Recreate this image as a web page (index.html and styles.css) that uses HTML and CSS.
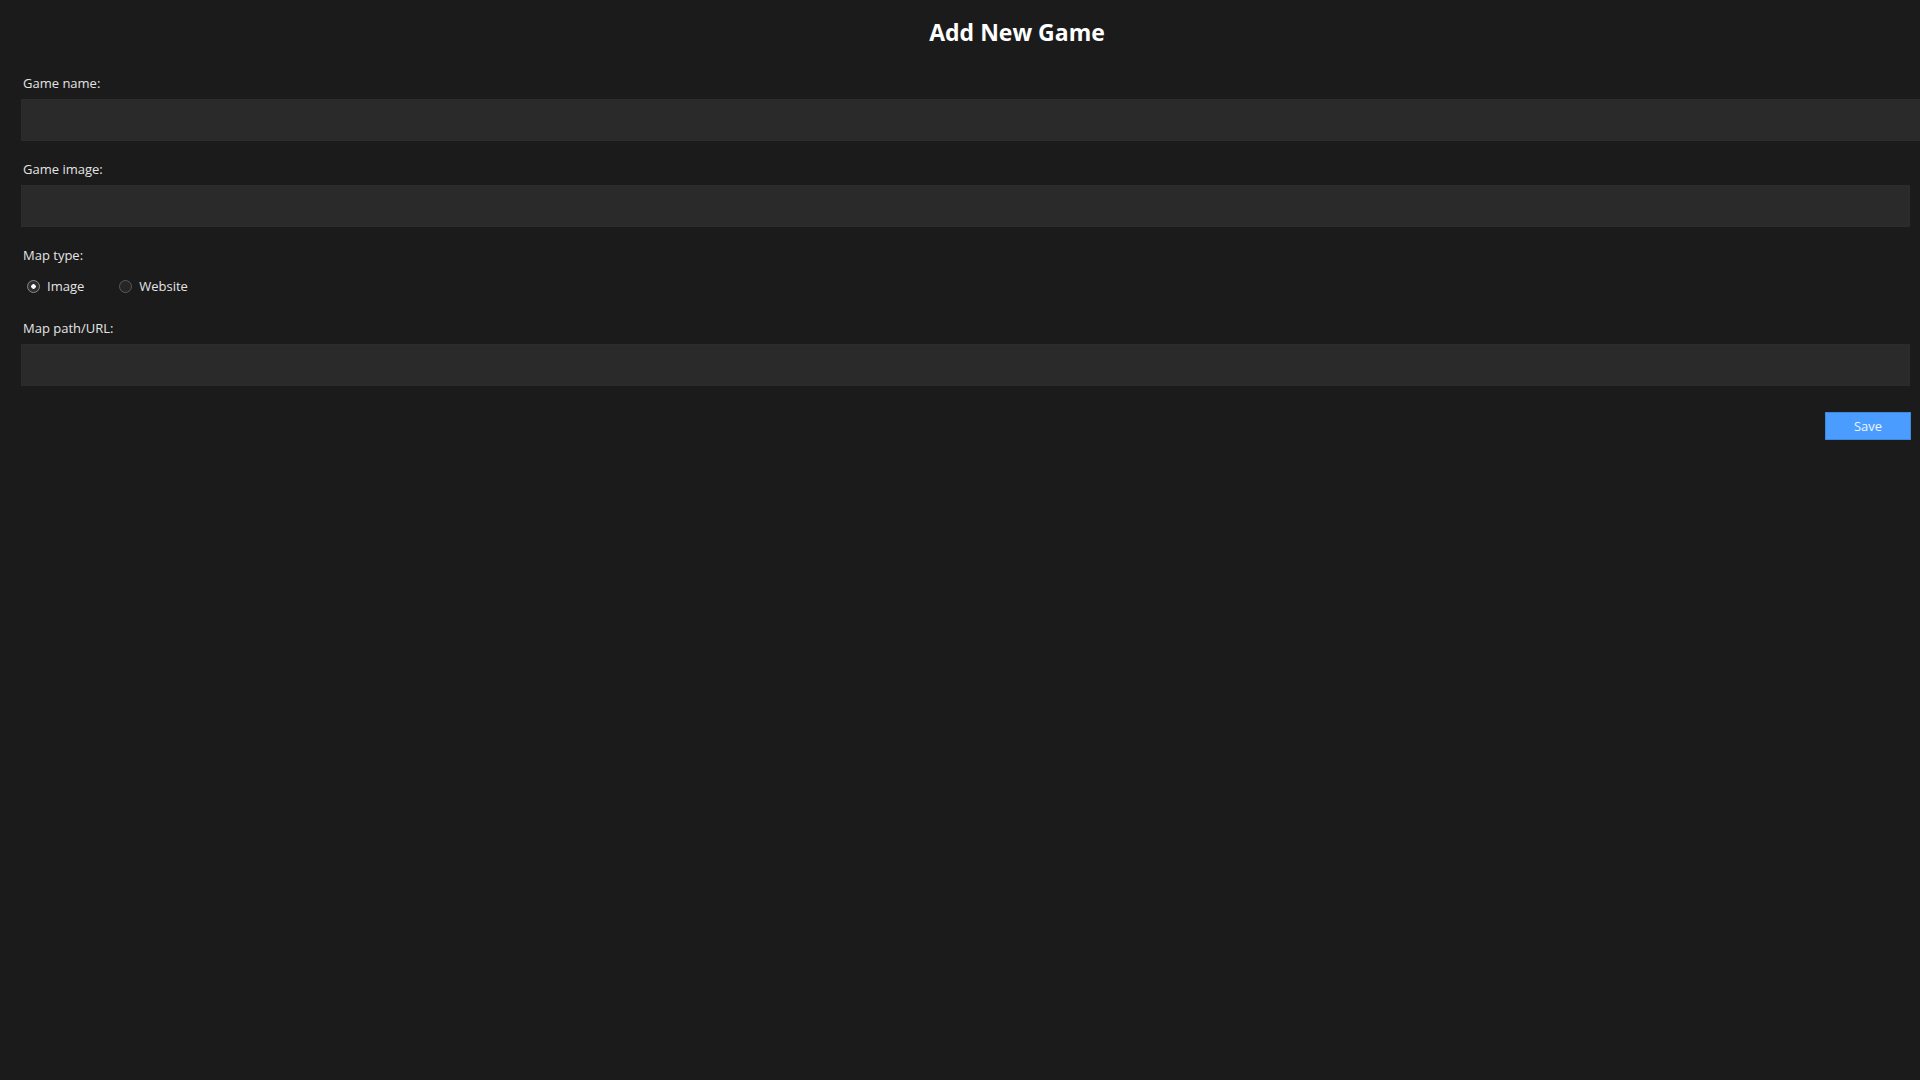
FILE: index.html
```html
<!doctype html>
<html>
<head>
<title>Add New Game</title>
<link rel="stylesheet" href="styles.css">
</head>
<body>

<h1 class="title">Add New Game</h1>

<div class="form">
	<div class="field">
		<label class="label" for="gameName">Game name:</label>
		<input type="text" id="gameName" class="textInput wide">
	</div>

	<div class="field">
		<label class="label" for="gameImage">Game image:</label>
		<input type="text" id="gameImage" class="textInput">
	</div>

	<div class="field">
		<div class="label">Map type:</div>
		<div class="radioRow">
			<label class="radio"><input type="radio" name="mapType" value="image" checked> Image</label>
			<label class="radio"><input type="radio" name="mapType" value="website"> Website</label>
		</div>
	</div>

	<div class="field">
		<label class="label" for="mapPath">Map path/URL:</label>
		<input type="text" id="mapPath" class="textInput">
	</div>

	<div class="actions">
		<button class="saveButton">Save</button>
	</div>
</div>

</body>
</html>
```

FILE: styles.css
```css
html, body {
	margin: 0px;
	padding: 0px;
	background-color: #1b1b1b;
	overflow: hidden;
}
body {
	font-family: "Open Sans", "Noto Sans", sans-serif;
	color: #e4e4e4;
	height: 1080px;
}
.title {
	margin: 0px;
	padding: 12px 0px 0px 114px;
	line-height: 40px;
	font-size: 23px;
	font-weight: bold;
	text-align: center;
	color: #ffffff;
}
.form {
	padding: 0px 10px 0px 21px;
}
.field {
	display: flex;
	flex-direction: column;
	margin-top: 19px;
}
.field:first-child {
	margin-top: 22px;
}
.label {
	display: block;
	font-size: 13px;
	line-height: 18px;
	margin: 0px 0px 7px 2px;
}
.textInput {
	box-sizing: border-box;
	height: 42px;
	margin: 0px;
	padding: 0px 8px;
	border: 1px solid #2c2c2c;
	background-color: #2a2a2a;
	color: #e4e4e4;
	font-family: inherit;
	font-size: 13px;
	outline: none;
}
.wide {
	margin-right: -20px;
}
.radioRow {
	display: flex;
	gap: 35px;
	height: 20px;
	margin: 5px 0px 4px 6px;
	align-items: center;
}
.radio {
	display: flex;
	align-items: center;
	gap: 4px;
	font-size: 13px;
}
.radio input {
	appearance: none;
	box-sizing: border-box;
	width: 13px;
	height: 13px;
	margin: 0px 3px 0px 0px;
	border-radius: 50%;
	border: 1px solid #5a5a5a;
	background-color: #262626;
}
.radio input:checked {
	border-color: #8a8a8a;
	background: radial-gradient(circle, #ffffff 0px, #ffffff 2px, #303030 2.5px);
}
.actions {
	display: flex;
	justify-content: flex-end;
	margin: 26px -1px 0px 0px;
}
.saveButton {
	width: 86px;
	height: 28px;
	border: 1px solid #3d88de;
	background-color: #4a9dff;
	color: #eef5ff;
	font-family: inherit;
	font-size: 13px;
	padding: 0px;
}
```
